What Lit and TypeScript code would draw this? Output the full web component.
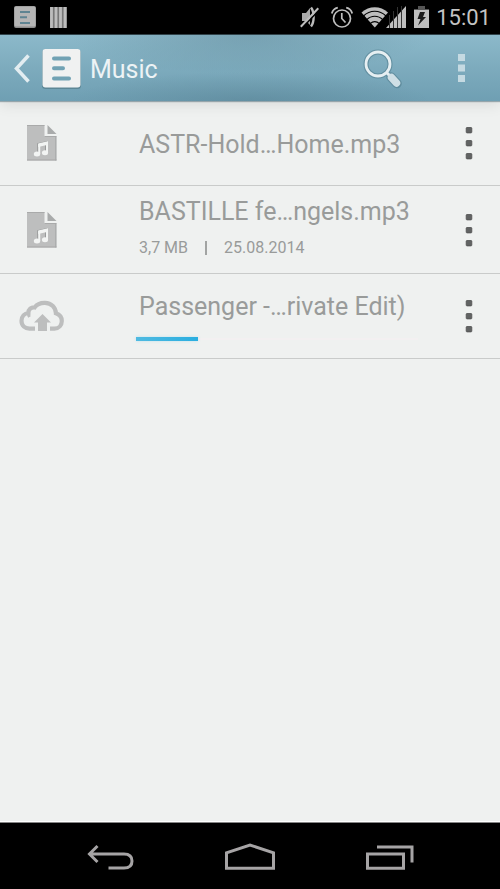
import { LitElement, html, css, svg } from "lit";
import { customElement, property } from "lit/decorators.js";

type Item = { name: string; kind: "audio" | "upload"; size?: string; date?: string; progress?: number };

const items: Item[] = [
  { name: "ASTR-Hold…Home.mp3", kind: "audio" },
  { name: "BASTILLE fe…ngels.mp3", kind: "audio", size: "3,7 MB", date: "25.08.2014" },
  { name: "Passenger -…rivate Edit)", kind: "upload", progress: 22 },
];

const audioIcon = html`<svg width="32" height="38" viewBox="0 0 32 38" aria-hidden="true">
  <path d="M1 1H18.500V12.500H30.500V36.500H1Z" fill="#bdbebe"/>
  <path d="M1 1.500H18.500M18.500 12.500H30.500" stroke="#a9aaaa"/>
  <path d="M29.800 12.500V36.500M1 36H30.500" stroke="#a6a7a7"/>
  <path d="M21.500 1V10H30.500Z" fill="#a9abab"/>
  <path d="M13.200 30V20.800L21 19V28.500" fill="none" stroke="#999b9b" stroke-width="2.400" transform="translate(-.8 -.5)"/>
  <path d="M13.200 30V20.800L21 19V28.500" fill="none" stroke="#f2f4f3" stroke-width="2"/>
  <path d="M12.200 19.500L22 17.300V20.700L12.200 22.900Z" fill="#f2f4f3"/>
  <ellipse cx="11" cy="30" rx="3.200" ry="2.500" fill="#f2f4f3"/>
  <ellipse cx="19" cy="28.700" rx="3.100" ry="2.500" fill="#f2f4f3"/>
</svg>`;

const uploadIcon = html`<svg width="46" height="32" viewBox="0 0 46 32" aria-hidden="true">
  <path d="M16 28.600H10.500C6 28.600 2.500 25.500 2.500 20.800C2.500 16.500 5.500 13.500 9.400 13C9.300 9.200 12.200 7 15.700 7.400C18 4 21.800 2.700 26 2.800C32.500 3 36.800 7.800 36.900 13.300C40.500 14.500 42.800 17 42.800 21C42.800 25.300 39.800 28.600 35.500 28.600H31" fill="none" stroke="#bdbebe" stroke-width="4.200"/>
  <path d="M9.400 13C9.400 15 9.800 16 10.500 17" fill="none" stroke="#bdbebe" stroke-width="3"/>
  <path d="M23.500 14L32 22.500H28V31H19V22.500H15Z" fill="#bdbebe"/>
</svg>`;

@customElement("status-bar")
class StatusBar extends LitElement {
  static styles = css`
    :host { display: flex; align-items: center; height: 34px; padding: 0 9px 0 14px; background: #000; border-bottom: 1px solid #33464d; }
    svg { display: block; flex: none; }
    .side { display: flex; align-items: center; }
    .left { gap: 14px; }
    .right { margin-left: auto; gap: 7px; }
    .pair { gap: 11px; margin-right: 1px; }
    .clock { font-size: 22px; line-height: 28px; color: #c4c4c4; padding-top: 2px; }
  `;
  render() {
    return html`
      <div class="side left">
        <svg width="22" height="22" viewBox="0 0 22 22" aria-hidden="true">
          <rect width="22" height="22" rx="2" fill="#8d8d8d"/><rect x=".5" y=".5" width="21" height="20" rx="1.500" fill="#b5b5b5"/>
          <path d="M6 6H16M6 11.200H13M6 17H16" stroke="#5f8492" stroke-width="2"/>
        </svg>
        <svg width="17" height="22" viewBox="0 0 17 22" aria-hidden="true">
          <rect y="1" width="17" height="21" fill="#777"/>
          <path d="M1.500 1V22M6 1V22M10.500 1V22M15 1V22" stroke="#bdbdbd" stroke-width="2.800"/>
        </svg>
      </div>
      <div class="side right">
        <div class="side pair">
          <svg width="20" height="24" viewBox="0 0 20 24" aria-hidden="true">
            <path d="M2 8H6L10 3V20L6 16H2Z" fill="#aaa"/>
            <path d="M11 2.500C14.500 7 14.500 17 11 21.500" fill="none" stroke="#bbb" stroke-width="2.400"/>
            <path d="M2.500 22.500L19.500 4.500" stroke="#000" stroke-width="1.600"/>
            <path d="M.8 21.800L18.300 3.300" stroke="#bebebe" stroke-width="2"/>
          </svg>
          <svg width="22" height="24" viewBox="0 0 22 24" aria-hidden="true" fill="none" stroke="#bebebe">
            <circle cx="11" cy="13.500" r="8.500" stroke-width="1.700"/>
            <path d="M10.800 8V13.500L14.500 17.500" stroke-width="1.700"/>
            <path d="M.8 8.500C1.500 5.500 4 3.200 6.800 2.600M21.200 8.500C20.500 5.500 18 3.200 15.200 2.600" stroke-width="1.800"/>
          </svg>
        </div>
        <svg width="46" height="24" viewBox="0 0 46 24" aria-hidden="true">
          <path d="M.5 7.500C8 .5 19.500 .5 27 7.500L13.800 22.500Z" fill="#bebebe"/>
          <path d="M2.500 11C9 4.700 18.500 4.700 25 11M5.500 14.800C10.500 10 17 10 22 14.800M9 18.700C12 16 15.500 16 18.500 18.700" fill="none" stroke="#000" stroke-width="1.100"/>
          <path d="M25 23L45 1V23Z" fill="#bebebe"/>
          <path d="M28.500 10V23M32.500 6V23M36.500 2V23M40.500 1V23" stroke="#333" stroke-width="1"/>
        </svg>
        <svg width="15" height="24" viewBox="0 0 15 24" aria-hidden="true">
          <path d="M4 1H11V4H15V7H0V4H4Z" fill="#555"/>
          <rect y="5" width="15" height="18" fill="#bebebe"/>
          <path d="M6 7H11L9 12H12L4 20.500L6.500 14H3.500Z" fill="#1a1a1a"/>
        </svg>
        <span class="clock">15:01</span>
      </div>`;
  }
}

@customElement("action-bar")
class ActionBar extends LitElement {
  static styles = css`
    :host {
      display: flex; align-items: center; height: 66px; box-sizing: border-box; padding: 0 15px 0 12px;
      position: relative; z-index: 1;
      background:
        radial-gradient(ellipse 36% 60% at 50% 0, rgba(60, 95, 110, .25), transparent),
        radial-gradient(ellipse 36% 45% at 50% 100%, rgba(60, 95, 110, .25), transparent),
        linear-gradient(#8cb9ca, #7dabbd 50%, #6f9fb3);
      box-shadow: 0 1px 1px rgba(100, 125, 135, .6), 0 3px 14px rgba(0, 0, 0, .1);
    }
    button { border: 0; padding: 0; background: none; display: flex; align-items: center; cursor: pointer; font: inherit; }
    svg { display: block; }
    h1 { margin: 0 0 0 8px; font-weight: 400; font-size: 25px; line-height: 32px; color: #edf3f5; padding-top: 4px; }
    .actions { margin-left: auto; display: flex; align-items: center; gap: 35px; }
    .more { width: 48px; height: 48px; justify-content: center; }
  `;
  render() {
    return html`
      <button aria-label="Back">
        <svg width="70" height="44" viewBox="0 0 70 44" aria-hidden="true">
          <path d="M16.500 9.500L4.500 22.500L16.500 35.500" fill="none" stroke="#e3edf1" stroke-width="3.500"/>
          <rect x="30" y="3.500" width="39" height="39.500" rx="3.500" fill="#547a88" opacity=".7"/>
          <rect x="30.500" y="3" width="38" height="38.500" rx="3" fill="#f0f1f1"/>
          <path d="M42 12.500H57M42 22.200H51M42 32.500H57" stroke="#71a2b4" stroke-width="4" stroke-linecap="round"/>
        </svg>
      </button>
      <h1>Music</h1>
      <div class="actions">
        <button aria-label="Search">
          <svg width="40" height="42" viewBox="0 0 40 42" aria-hidden="true">
            <g fill="none" stroke="#507d8e" opacity=".6"><circle cx="16" cy="17" r="12" stroke-width="5"/><path d="M25 26L28 29" stroke-width="5"/><path d="M29 30L35 36.500" stroke-width="9.500" stroke-linecap="round"/></g>
            <g fill="none" stroke="#e6eff2"><circle cx="16" cy="17" r="12" stroke-width="2.800"/><path d="M25 26L29 30" stroke-width="3"/></g>
            <path d="M29.500 30.500L34.500 36" stroke="#cfdfe5" stroke-width="7.500" stroke-linecap="round"/>
          </svg>
        </button>
        <button class="more" aria-label="More options">
          <svg width="7" height="28" viewBox="0 0 7 28" fill="#c5dae2" aria-hidden="true"><path d="M0 0H7V7H0ZM0 10.500H7V17.500H0ZM0 21H7V28H0Z"/></svg>
        </button>
      </div>`;
  }
}

@customElement("file-row")
class FileRow extends LitElement {
  @property({ attribute: false }) item!: Item;
  static styles = css`
    :host { display: grid; grid-template-columns: 136px minmax(0, 1fr) 62px; align-items: center; border-bottom: 1px solid #c9cbca; min-height: 84px; box-sizing: content-box; }
    svg { display: block; }
    .icon { display: flex; width: 46px; margin-left: 19px; justify-content: center; }
    .body { min-width: 0; padding-top: 4px; }
    .name { margin: 0 3px; font-weight: 400; font-size: 25px; line-height: 32px; color: #999b9a; white-space: nowrap; overflow: hidden; text-overflow: ellipsis; }
    .meta { display: flex; align-items: center; gap: 17px; margin: 8px 3px 0; font-size: 16px; line-height: 24px; color: #999b9a; }
    .rule { width: 2px; height: 14px; background: #a2a4a3; }
    .bar { height: 4px; margin: 14px 20px 0 0; background: linear-gradient(#f3f0f1, #f3f0f1) center / 100% 2px no-repeat; }
    .fill { height: 4px; background: linear-gradient(90deg, #4fbae1, #2aaee0); box-shadow: 0 0 3px rgba(79, 190, 230, .3); }
    .twoline { padding: 10px 0 13px; }
    .loading { padding: 0; }
    button { justify-self: center; width: 48px; height: 48px; border: 0; padding: 0; background: none; display: flex; align-items: center; justify-content: center; cursor: pointer; }
  `;
  render() {
    const i = this.item;
    const loading = i.progress !== undefined;
    return html`
      <div class="icon">${i.kind === "audio" ? audioIcon : uploadIcon}</div>
      <div class="body ${i.size ? "twoline" : loading ? "loading" : ""}">
        <h2 class="name">${i.name}</h2>
        ${i.size ? html`<div class="meta"><span>${i.size}</span><span class="rule"></span><span>${i.date}</span></div>` : ""}
        ${loading ? html`<div class="bar" role="progressbar" aria-label="Upload" aria-valuenow=${i.progress!}><div class="fill" style="width:${i.progress}%"></div></div>` : ""}
      </div>
      <button aria-label="Options for ${i.name}">
        <svg width="8" height="34" viewBox="0 0 8 34" fill="#616363" stroke="#505252" stroke-width=".8" aria-hidden="true">
          ${[1.5, 14.5, 27.5].map((y) => svg`<rect x="1.200" y=${y} width="5.600" height="5.400" rx=".8"/>`)}
        </svg>
      </button>`;
  }
}

@customElement("nav-bar")
class NavBar extends LitElement {
  static styles = css`
    :host { display: grid; grid-template-columns: repeat(3, 28%); justify-content: center; height: 66px; background: #000; border-top: 1px solid #858585; box-shadow: 0 -1px #fff; }
    button { border: 0; padding: 0; background: none; display: flex; align-items: center; justify-content: center; cursor: pointer; }
    svg { display: block; fill: none; stroke: #a6a4a5; stroke-width: 3; }
  `;
  render() {
    return html`
      <button aria-label="Back"><svg width="50" height="30" viewBox="0 0 50 30" aria-hidden="true"><path d="M12.500 5L4.500 13L12.500 21M5 13H39C44.500 13 47 15.500 47 20C47 24.500 44.500 27 39 27H23.500"/></svg></button>
      <button aria-label="Home"><svg width="50" height="30" viewBox="0 0 50 30" aria-hidden="true"><path d="M1.500 27.300V11.800L25 4L48.500 11.800V27.300Z"/></svg></button>
      <button aria-label="Recent apps"><svg width="50" height="30" viewBox="0 0 50 30" aria-hidden="true"><path d="M2.500 13H38.500V27.300H2.500ZM12 6H47V21.500"/></svg></button>`;
  }
}

@customElement("app-root")
class AppRoot extends LitElement {
  static styles = css`
    :host { display: flex; flex-direction: column; min-height: 100vh; background: #eff1f0; font-family: Roboto, "Noto Sans", sans-serif; }
    main { flex: 1; }
  `;
  render() {
    return html`
      <status-bar></status-bar>
      <action-bar></action-bar>
      <main>${items.map((item) => html`<file-row .item=${item}></file-row>`)}</main>
      <nav-bar></nav-bar>`;
  }
}
